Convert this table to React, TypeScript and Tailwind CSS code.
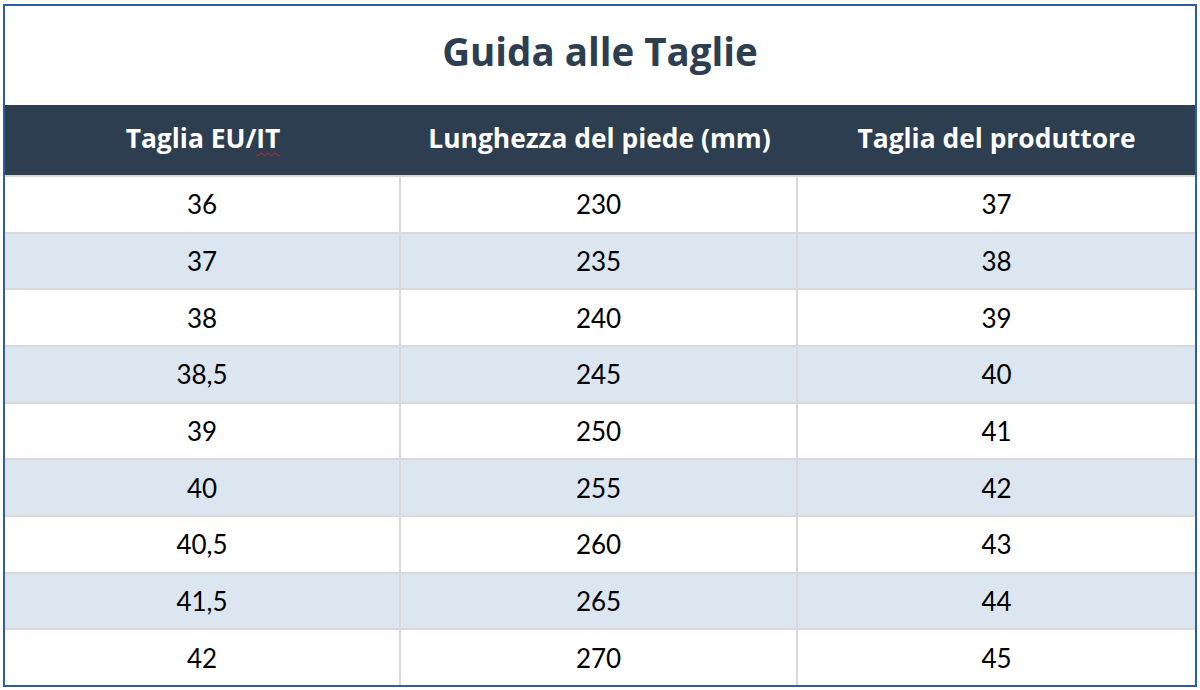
import React from "react";

const rows: [string, string, string][] = [
  ["36", "230", "37"],
  ["37", "235", "38"],
  ["38", "240", "39"],
  ["38,5", "245", "40"],
  ["39", "250", "41"],
  ["40", "255", "42"],
  ["40,5", "260", "43"],
  ["41,5", "265", "44"],
  ["42", "270", "45"],
];

export default function App() {
  return (
    <div
      className="w-[1200px] h-[690px] bg-white pt-[4px] pl-[3px] overflow-hidden"
      style={{ fontFamily: "Lato, 'Open Sans', sans-serif" }}
    >
      <div className="w-[1194px] h-[683px] border-2 border-[#2f5d9f] flex flex-col">
        <div className="h-[99px] flex items-center justify-center pb-[8px]">
          <h1 className="text-[38.5px] font-bold text-[#2c3e50] leading-none font-['Open_Sans',sans-serif]">Guida alle Taglie</h1>
        </div>
        <div className="h-[70px] bg-[#2c3e50] grid grid-cols-[396px_397px_1fr] text-white font-bold text-[26.4px] leading-none font-['Open_Sans',sans-serif] pb-[3px]">
          <div className="flex items-center justify-center">
            <span>
              Taglia EU/
              <span className="underline decoration-wavy decoration-[#e02020] decoration-1 underline-offset-[4px]">IT</span>
            </span>
          </div>
          <div className="flex items-center justify-center">Lunghezza del piede (mm)</div>
          <div className="flex items-center justify-center">Taglia del produttore</div>
        </div>
        <div className="flex-1 flex flex-col border-t-2 border-[#d9d9d9]">
          {rows.map((r, i) => (
            <div
              key={i}
              className={`flex-1 grid grid-cols-[396px_397px_1fr] text-[26px] text-black leading-none ${
                i < rows.length - 1 ? "border-b-2 border-[#d9d9d9]" : ""
              } ${i % 2 === 1 ? "bg-[#dce6f0]" : "bg-white"}`}
            >
              <div className="flex items-center justify-center border-r-2 border-[#d9d9d9]">{r[0]}</div>
              <div className="flex items-center justify-center border-r-2 border-[#d9d9d9]">{r[1]}</div>
              <div className="flex items-center justify-center">{r[2]}</div>
            </div>
          ))}
        </div>
      </div>
    </div>
  );
}
